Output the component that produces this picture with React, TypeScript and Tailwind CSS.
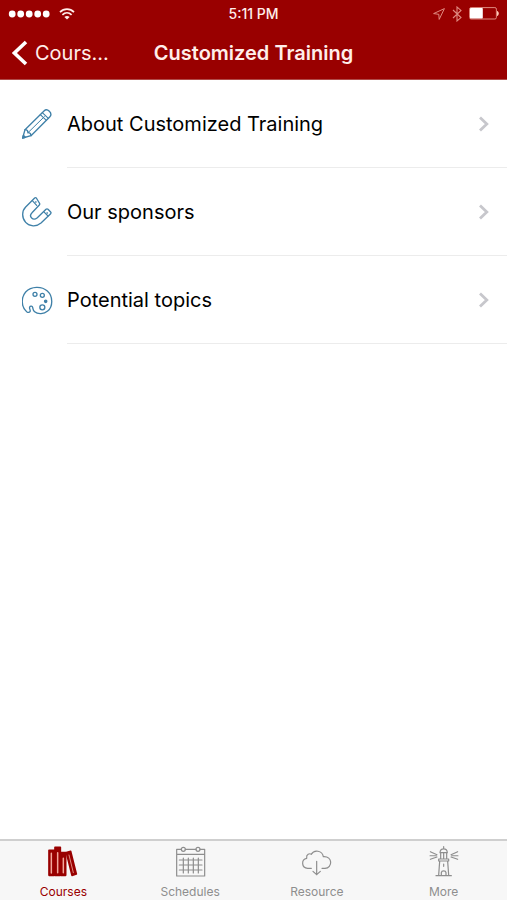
import type { ReactNode } from "react"

const rows = [
  { label: "About Customized Training", icon: <PencilIcon /> },
  { label: "Our sponsors", icon: <MagnetIcon /> },
  { label: "Potential topics", icon: <PaletteIcon /> },
]

const tabs = [
  { label: "Courses", icon: <BooksIcon />, active: true },
  { label: "Schedules", icon: <CalendarIcon />, active: false },
  { label: "Resource", icon: <CloudIcon />, active: false },
  { label: "More", icon: <LighthouseIcon />, active: false },
]

export default function App() {
  return (
    <div className="flex min-h-screen flex-col bg-white font-['Inter','Liberation_Sans',sans-serif] text-black">
      <header className="border-b border-[#b04a48] bg-[#990000] text-[#ffeeea]">
        <StatusBar />
        <div className="grid h-[52px] grid-cols-[1fr_auto_1fr] items-center px-3">
          <button className="flex items-center gap-[7px] text-xl">
            <svg width="16" height="26" viewBox="0 0 16 26" fill="none" stroke="white" strokeWidth="3.6">
              <path d="M14 2 2.4 13 14 24" />
            </svg>
            Cours...
          </button>
          <h1 className="text-xl font-semibold">Customized Training</h1>
        </div>
      </header>

      <main className="flex-1">
        <ul>
          {rows.map((row) => (
            <li key={row.label}>
              <a href="#" className="flex items-center gap-[13px] pl-[22px]">
                {row.icon}
                <span className="flex h-[88px] flex-1 items-center justify-between border-b border-[#ececec] pr-[18px] text-xl">
                  {row.label}
                  <svg width="11" height="16" viewBox="0 0 11 16" fill="none" stroke="#c7c7cc" strokeWidth="2.8">
                    <path d="M2 1.5 8.8 8 2 14.5" />
                  </svg>
                </span>
              </a>
            </li>
          ))}
        </ul>
      </main>

      <nav className="grid grid-cols-4 border-t-2 border-[#cfcfcf] bg-[#f7f7f7]">
        {tabs.map((tab) => (
          <a
            key={tab.label}
            href="#"
            className={`flex h-[59px] flex-col items-center pt-[5px] text-xs ${tab.active ? "text-[#990000]" : "text-[#8e8e8e]"}`}
          >
            {tab.icon}
            <span className="mt-[6px]">{tab.label}</span>
          </a>
        ))}
      </nav>
    </div>
  )
}

function StatusBar() {
  return (
    <div className="grid h-[27px] grid-cols-[1fr_auto_1fr] items-center px-2 text-sm font-medium">
      <div className="flex items-center gap-[9px]">
        <svg width="42" height="8" viewBox="0 0 42 8" fill="white">
          <circle cx="4.2" cy="4" r="3.4" />
          <circle cx="12.7" cy="4" r="3.4" />
          <circle cx="21.2" cy="4" r="3.4" />
          <circle cx="29.7" cy="4" r="3.4" />
          <circle cx="38.2" cy="4" r="3.4" />
        </svg>
        <svg width="16" height="12" viewBox="0 0 16 12" fill="none" stroke="currentColor" strokeWidth="1.7">
          <path d="M1 4.2C5 .2 11 .2 15 4.2M3.4 6.9c2.7-2.6 6.5-2.6 9.2 0" />
          <path d="M8 11.6 5.4 9c1.5-1.3 3.7-1.3 5.2 0Z" fill="currentColor" stroke="none" />
        </svg>
      </div>
      <span>5:11 PM</span>
      <div className="flex items-center justify-end gap-[7px]">
        <svg width="12" height="12" viewBox="0 0 12 12" fill="none" stroke="#e08a80" strokeWidth="1">
          <path d="M11.4.6.6 5.6l5.2.7.4 5.1Z" />
        </svg>
        <svg width="10" height="16" viewBox="0 0 10 16" fill="none" stroke="#e08a80" strokeWidth="1.1">
          <path d="m1 4 8 7.6L5 15V1l4 3.4L1 12" />
        </svg>
        <svg width="30" height="13" viewBox="0 0 30 13">
          <rect x=".6" y=".6" width="26.8" height="11.4" rx="1.5" fill="none" stroke="#e08a80" />
          <rect x="1" y="1" width="12.8" height="10.6" rx=".8" fill="white" />
          <path d="M28 4c2.4.6 2.4 4.4 0 5Z" fill="#ffcbb8" />
        </svg>
      </div>
    </div>
  )
}

function RowIcon({ viewBox, children }: { viewBox: string; children: ReactNode }) {
  return (
    <svg
      width="32"
      height="32"
      viewBox={viewBox}
      fill="none"
      stroke="#3f80a8"
      strokeWidth="4"
      strokeLinecap="round"
      strokeLinejoin="round"
    >
      {children}
    </svg>
  )
}

function PencilIcon() {
  return (
    <RowIcon viewBox="36 40 96 96">
      <path d="M38 130 45 105 102 49c5-5 11-4 16 1s6 12 1 17L63 123Z" />
      <path d="M45 105c7 0 9 3 9 9 6 0 9 3 9 9" />
      <path d="m54 114 49-48" strokeWidth="3" />
      <path d="m91 60 18 17M97 54l18 17" strokeWidth="3.5" />
      <path d="m38 130 2-8 6 6Z" fill="#3f80a8" />
    </RowIcon>
  )
}

function MagnetIcon() {
  return (
    <RowIcon viewBox="36 35 96 96">
      <path d="M74 41 47 68c-12 12-12 33 0 46s32 14 46 2l29-28c2-2 2-3 0-5l-8-8c-2-2-4-2-6 0L82 100c-6 5-13 5-17 1s-4-11 1-16l22-23c2-2 2-4 0-6L79 41c-2-2-3-2-5 0Z" />
      <path d="m67 49 13 14M101 82l13 13" strokeWidth="3.5" />
      <circle cx="77" cy="53" r="1.5" strokeWidth="2" />
      <circle cx="111" cy="86" r="1.5" strokeWidth="2" />
    </RowIcon>
  )
}

function PaletteIcon() {
  return (
    <RowIcon viewBox="36 29 96 96">
      <path d="M50 112C33 98 33 69 47 53c17-18 48-18 65-3 18 16 17 47 1 60-11 9-29 11-39 2-5-4-5-8-6-13-1-4-7-5-9-1-2 5 4 10 1 14-2 3-6 3-10 0Z" />
      <circle cx="75" cy="60" r="6" />
      <circle cx="97" cy="63" r="6" />
      <circle cx="107" cy="81" r="3.5" fill="#3f80a8" />
      <circle cx="97" cy="99" r="7.5" />
    </RowIcon>
  )
}

function TabIcon({ viewBox, children }: { viewBox: string; children: ReactNode }) {
  return (
    <svg
      width="32"
      height="32"
      viewBox={viewBox}
      fill="none"
      stroke="currentColor"
      strokeWidth="3.6"
      strokeLinecap="round"
      strokeLinejoin="round"
    >
      {children}
    </svg>
  )
}

function BooksIcon() {
  return (
    <TabIcon viewBox="54 33 96 96">
      <g fill="currentColor" strokeWidth="5">
        <path d="M60 46h16v75H60ZM78 37h16v84H78ZM96 53h14v68H96Z" />
        <path d="m112 53 13-4 17 68-13 4Z" />
      </g>
      <path d="M67 55v59M86 53v60M103 70v43" stroke="#f3a79c" strokeWidth="4.5" />
      <path d="m120 60 13 53" stroke="#e08a80" strokeWidth="3" />
    </TabIcon>
  )
}

function CalendarIcon() {
  return (
    <TabIcon viewBox="57 33 96 96">
      <path d="M79 43H65v80h84V43h-14M91 43h32M65 58h84" />
      <circle cx="85" cy="43" r="6" />
      <circle cx="129" cy="43" r="6" />
      <path d="M73 75h68M73 90h68M73 105h68M85 69v45M100 69v45M115 69v45M130 69v45" />
    </TabIcon>
  )
}

function CloudIcon() {
  return (
    <TabIcon viewBox="63 33 96 96">
      <path d="M94 100H83c-19-1-20-27-3-30-2-12 9-16 14-12 8-15 33-12 36 7 29-2 28 34 5 35h-9" />
      <path d="M110 79v40M99 109l11 10 11-10" />
    </TabIcon>
  )
}

function LighthouseIcon() {
  return (
    <TabIcon viewBox="54 33 96 96">
      <path d="M101 35v6M90 53c1-15 21-15 22 0ZM92 53v18M110 53v18M101 55v16M86 72h30v6H86ZM89 79l-3 41M113 79l3 41M78 122h46" />
      <path d="M94 121v-8c1-7 13-7 14 0v8M101 87v7" />
      <path d="m61 50 20 9M60 62h19M61 73l20-7M143 50l-20 9M144 62h-19M143 73l-20-7" strokeWidth="3.2" />
    </TabIcon>
  )
}
